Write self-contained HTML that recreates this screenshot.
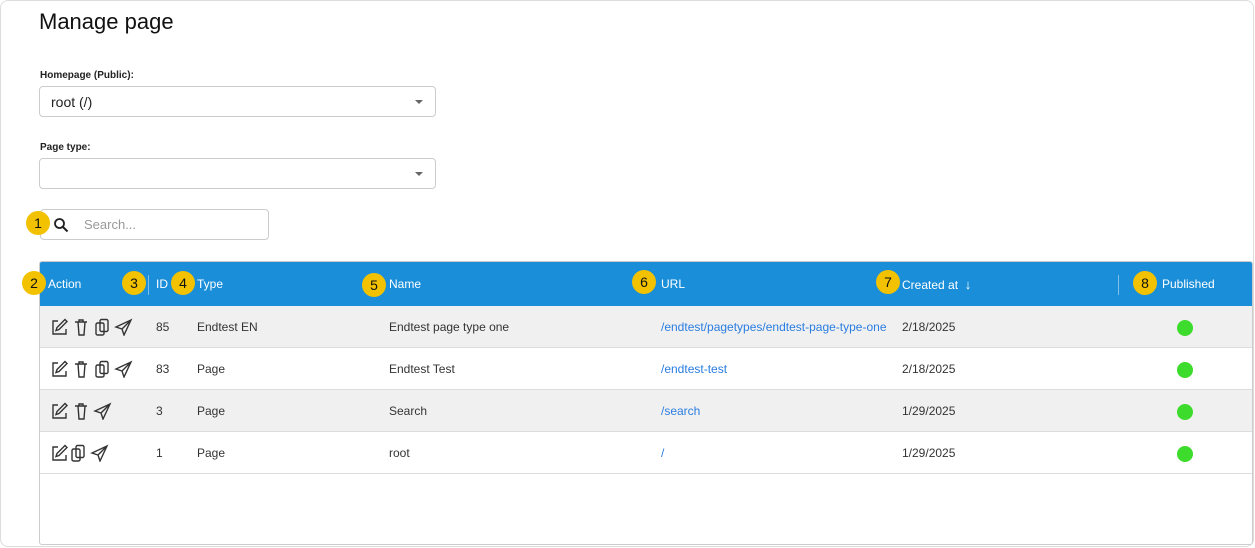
<!DOCTYPE html>
<html><head><style>
*{box-sizing:border-box;margin:0;padding:0}
body{width:1255px;height:548px;background:#fff;font-family:"Liberation Sans",Arial,sans-serif;position:relative;overflow:hidden}
.frame{position:absolute;left:0;top:0;width:1254px;height:547px;border:1px solid #ddd;border-radius:8px}
.a{position:absolute}
h1{position:absolute;left:39px;top:9px;font-size:22px;font-weight:normal;color:#111}
.lbl{font-size:10px;font-weight:bold;color:#222}
.sel{border:1px solid #ccc;border-radius:4px;width:397px;height:31px;left:39px}
.caret{position:absolute;right:12px;top:13px;width:0;height:0;border-left:4px solid transparent;border-right:4px solid transparent;border-top:4px solid #666}
.badge{position:absolute;width:24px;height:24px;border-radius:50%;background:#f2c200;color:#111;font-size:14px;text-align:center;line-height:24px}
.tbl{left:39px;top:261px;width:1214px;height:284px;border:1px solid #ccc;border-radius:3px;overflow:hidden}
.hdr{position:absolute;left:0;top:0;width:100%;height:44px;background:#1a8ed8}
.th{position:absolute;top:15px;color:#fff;font-size:12px}
.row{position:absolute;left:0;width:100%;height:42px;border-bottom:1px solid #ddd}
.td{position:absolute;top:14px;font-size:12px;color:#333}
.lnk{color:#2a7de1}
.dot{position:absolute;left:1137px;top:14px;width:16px;height:16px;border-radius:50%;background:#3ddc2c}
.ic{position:absolute;left:10px;top:12px}
</style></head><body>
<div class="frame"></div>
<h1>Manage page</h1>
<div class="a lbl" style="left:40px;top:70px">Homepage (Public):</div>
<div class="a sel" style="top:86px"><span class="a" style="left:11px;top:7px;font-size:14px;color:#222">root (/)</span><div class="caret"></div></div>
<div class="a lbl" style="left:40px;top:142px">Page type:</div>
<div class="a sel" style="top:158px"><div class="caret"></div></div>
<div class="a" style="left:40px;top:209px;width:229px;height:31px;border:1px solid #ccc;border-radius:4px">
<svg class="a" style="left:12px;top:7px" width="16" height="16" viewBox="0 0 16 16"><circle cx="6.5" cy="6.5" r="4.5" fill="none" stroke="#222" stroke-width="1.8"/><path d="M10 10l4.5 4.5" stroke="#222" stroke-width="2"/></svg>
<span class="a" style="left:43px;top:7px;font-size:13px;color:#999">Search...</span></div>
<div class="badge" style="left:26px;top:211px">1</div>
<div class="a tbl">
<div class="hdr">
<div class="th" style="left:8px">Action</div>
<div class="a" style="left:108px;top:13px;width:1px;height:20px;background:#7fc0ea"></div>
<div class="th" style="left:116px">ID</div>
<div class="th" style="left:157px">Type</div>
<div class="th" style="left:349px">Name</div>
<div class="th" style="left:621px">URL</div>
<div class="th" style="left:862px">Created at &nbsp;<span style="font-size:13px">↓</span></div>
<div class="a" style="left:1078px;top:13px;width:1px;height:20px;background:#7fc0ea"></div>
<div class="th" style="left:1122px">Published</div>
</div>
 <div class="row" style="top:44px;background:#f0f0f0">
  <svg class="ic" width="94" height="18" viewBox="0 0 94 18" fill="none" stroke="#333" stroke-width="1.4"><path d="M8 3H3v13h13v-5"/><path d="M15 1.5l2 2-8 8-3 1 1-3z"/><path d="M25 4h12M28 4l1 13h5l1-13M29 4V2h4v2"/><rect x="46" y="5" width="8" height="12" rx="1.5"/><rect x="50" y="1.5" width="8" height="12" rx="1.5"/><path d="M81 2L66 9l6 2 2 6z M72 11l9-9"/></svg>
  <div class="td" style="left:116px">85</div><div class="td" style="left:157px">Endtest EN</div><div class="td" style="left:349px">Endtest page type one</div><div class="td lnk" style="left:621px">/endtest/pagetypes/endtest-page-type-one</div><div class="td" style="left:862px">2/18/2025</div><div class="dot"></div></div>
 <div class="row" style="top:86px">
  <svg class="ic" width="94" height="18" viewBox="0 0 94 18" fill="none" stroke="#333" stroke-width="1.4"><path d="M8 3H3v13h13v-5"/><path d="M15 1.5l2 2-8 8-3 1 1-3z"/><path d="M25 4h12M28 4l1 13h5l1-13M29 4V2h4v2"/><rect x="46" y="5" width="8" height="12" rx="1.5"/><rect x="50" y="1.5" width="8" height="12" rx="1.5"/><path d="M81 2L66 9l6 2 2 6z M72 11l9-9"/></svg>
  <div class="td" style="left:116px">83</div><div class="td" style="left:157px">Page</div><div class="td" style="left:349px">Endtest Test</div><div class="td lnk" style="left:621px">/endtest-test</div><div class="td" style="left:862px">2/18/2025</div><div class="dot"></div></div>
 <div class="row" style="top:128px;background:#f0f0f0">
  <svg class="ic" width="94" height="18" viewBox="0 0 94 18" fill="none" stroke="#333" stroke-width="1.4"><path d="M8 3H3v13h13v-5"/><path d="M15 1.5l2 2-8 8-3 1 1-3z"/><path d="M25 4h12M28 4l1 13h5l1-13M29 4V2h4v2"/><path d="M60 2L45 9l6 2 2 6z M51 11l9-9"/></svg>
  <div class="td" style="left:116px">3</div><div class="td" style="left:157px">Page</div><div class="td" style="left:349px">Search</div><div class="td lnk" style="left:621px">/search</div><div class="td" style="left:862px">1/29/2025</div><div class="dot"></div></div>
 <div class="row" style="top:170px">
  <svg class="ic" width="94" height="18" viewBox="0 0 94 18" fill="none" stroke="#333" stroke-width="1.4"><path d="M8 3H3v13h13v-5"/><path d="M15 1.5l2 2-8 8-3 1 1-3z"/><rect x="22" y="5" width="8" height="12" rx="1.5"/><rect x="26" y="1.5" width="8" height="12" rx="1.5"/><path d="M57 2L42 9l6 2 2 6z M48 11l9-9"/></svg>
  <div class="td" style="left:116px">1</div><div class="td" style="left:157px">Page</div><div class="td" style="left:349px">root</div><div class="td lnk" style="left:621px">/</div><div class="td" style="left:862px">1/29/2025</div><div class="dot"></div></div>
</div>
<div class="badge" style="left:22px;top:271px">2</div>
<div class="badge" style="left:122px;top:271px">3</div>
<div class="badge" style="left:171px;top:271px">4</div>
<div class="badge" style="left:362px;top:273px">5</div>
<div class="badge" style="left:632px;top:270px">6</div>
<div class="badge" style="left:876px;top:270px">7</div>
<div class="badge" style="left:1133px;top:271px">8</div>
</body></html>
